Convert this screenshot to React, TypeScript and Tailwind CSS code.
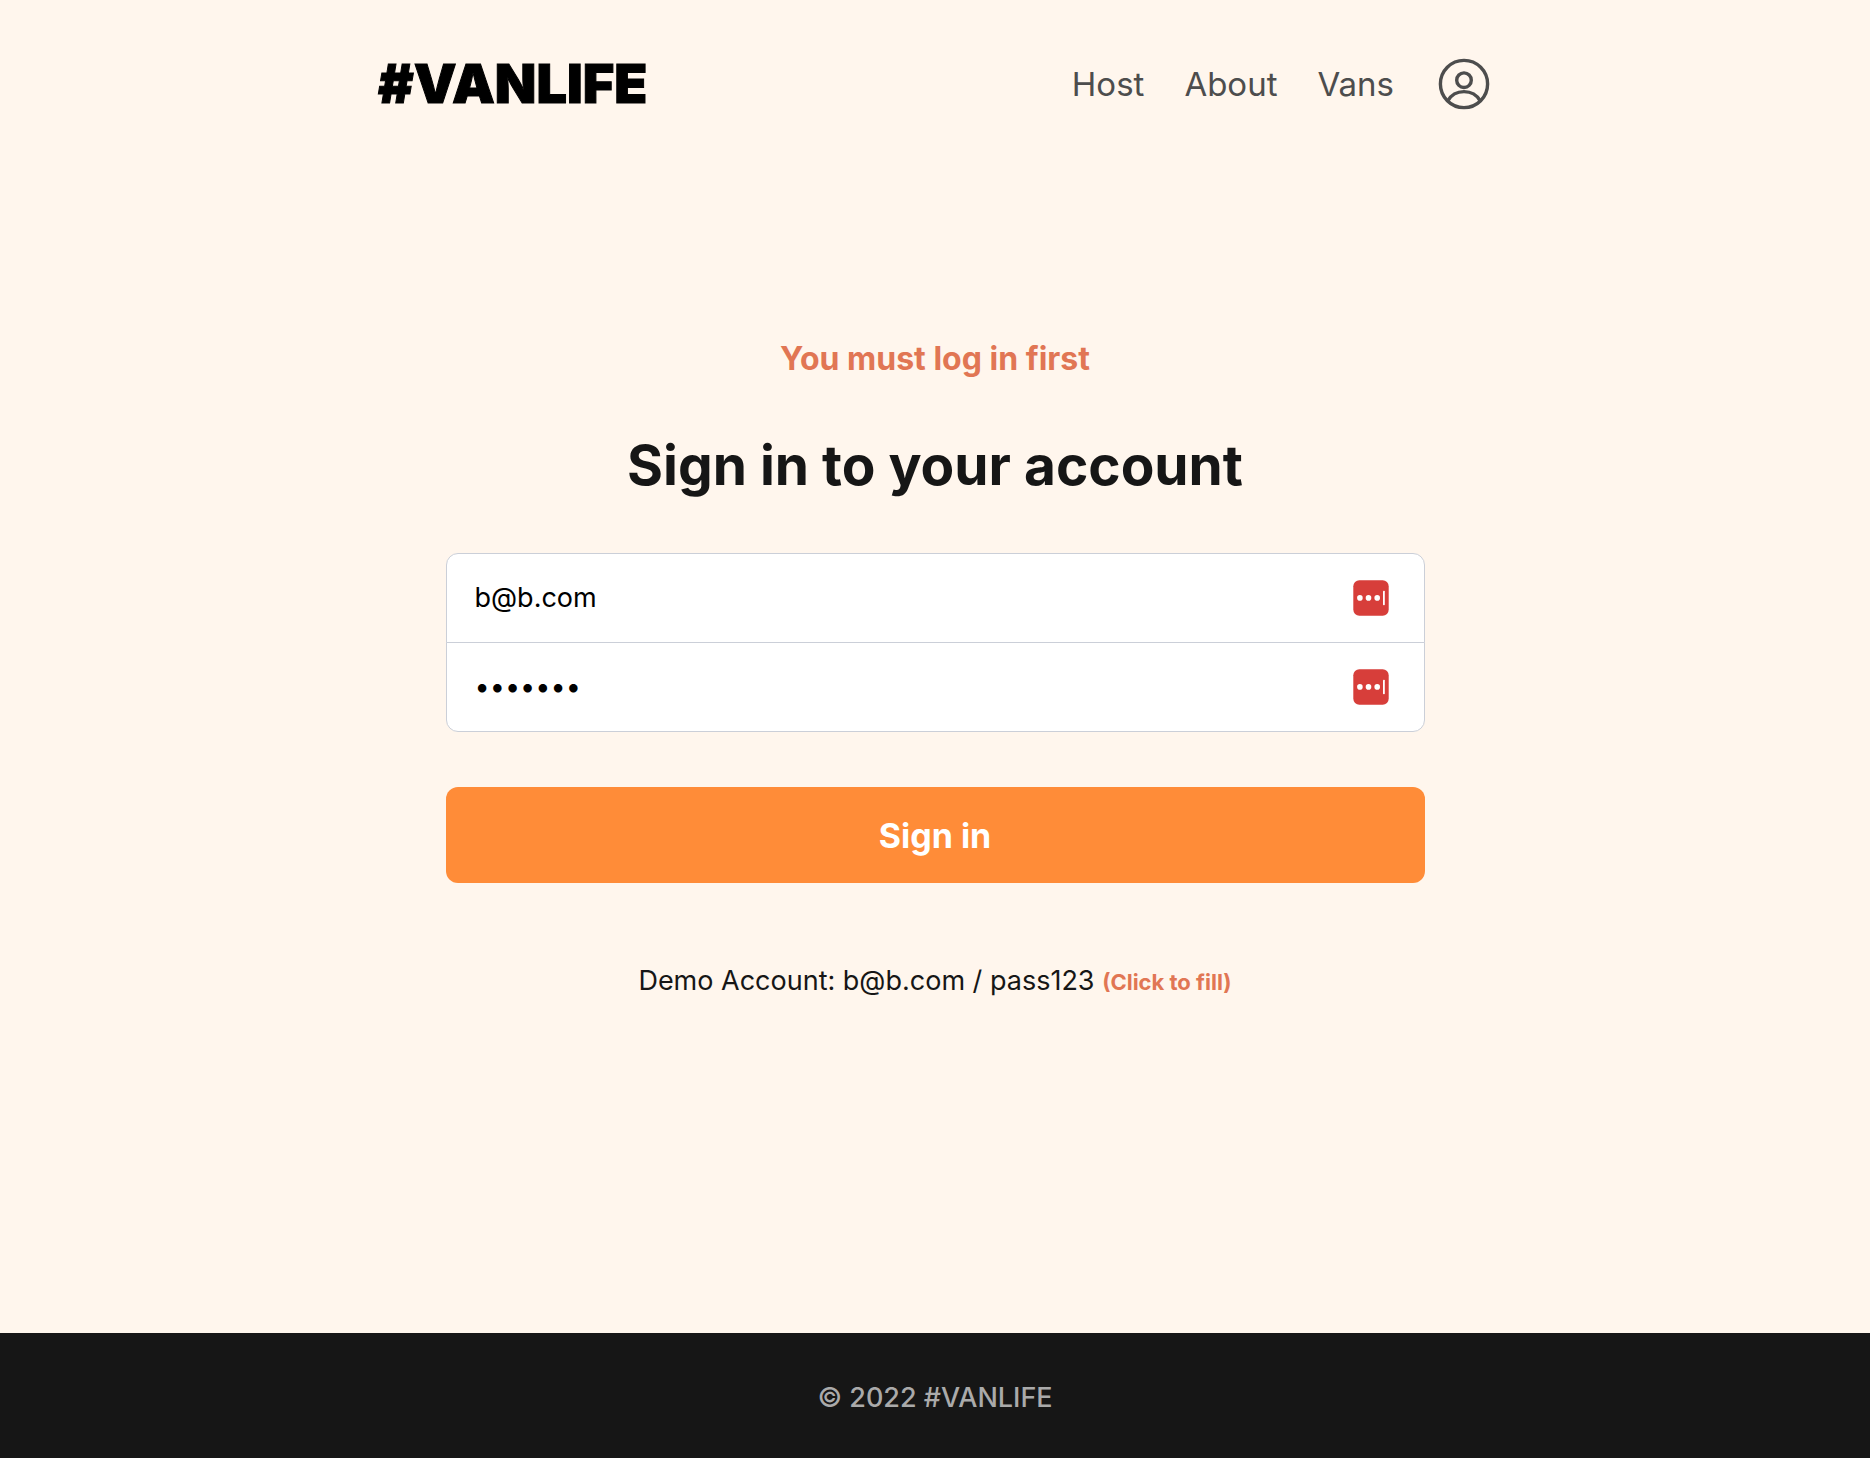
import { useState } from "react";

function UserIcon() {
  return (
    <svg viewBox="0 0 52 52" className="size-[52px]" fill="none" stroke="currentColor" strokeWidth="3.4" aria-hidden="true">
      <circle cx="26" cy="26" r="23.6" />
      <circle cx="26" cy="22.2" r="7.3" />
      <path d="M9.8 42.8C13 37.2 18.8 33.6 26 33.6S39 37.2 42.2 42.8" />
    </svg>
  );
}

function FillIcon() {
  return (
    <svg viewBox="0 0 36 36" className="size-9" aria-hidden="true">
      <rect x="0.3" y="0.3" width="35.4" height="35.4" rx="6" fill="#d73e3a" />
      <circle cx="6.9" cy="17.9" r="2.8" fill="#fff" />
      <circle cx="15.5" cy="17.9" r="2.8" fill="#fff" />
      <circle cx="24.2" cy="17.9" r="2.8" fill="#fff" />
      <rect x="30" y="10.8" width="1.8" height="14.4" rx="0.8" fill="#fff" />
    </svg>
  );
}

const links = ["Host", "About", "Vans"];
const field =
  "block w-full border border-[#cbcfd8] bg-white py-6 pl-7 pr-20 text-[27px] leading-10 text-black outline-none";
const fillButton = "absolute right-9 top-1/2 -translate-y-1/2";

export default function App() {
  const [email, setEmail] = useState("b@b.com");
  const [password, setPassword] = useState("pass123");
  const fill = () => {
    setEmail("b@b.com");
    setPassword("pass123");
  };

  return (
    <div className="flex min-h-screen flex-col bg-[#fff6ed] font-['Inter',sans-serif] text-[#161616]">
      <header className="mx-auto flex w-full max-w-[1114px] items-center justify-between pt-14 pb-[55px]">
        <a
          href="#home"
          className="text-[54px] font-black leading-[56px] text-black [-webkit-text-stroke:1px_black]"
        >
          #VANLIFE
        </a>
        <nav className="flex items-center gap-10 pr-[2px] text-[33px] leading-10 text-[#4d4d4d]">
          {links.map((l) => (
            <a key={l} href={`#${l.toLowerCase()}`}>
              {l}
            </a>
          ))}
          <a href="#login" aria-label="Account" className="ml-1">
            <UserIcon />
          </a>
        </nav>
      </header>

      <main className="mx-auto flex w-full max-w-[979px] flex-1 flex-col items-center pt-[172px]">
        <h3 className="text-[32px] font-bold leading-10 text-[#e17654]">You must log in first</h3>
        <h1 className="mt-[54px] text-[55px] font-bold leading-[64px]">Sign in to your account</h1>
        <form className="mt-14 w-full" onSubmit={(e) => e.preventDefault()}>
          <div className="relative">
            <input
              type="email"
              aria-label="Email address"
              value={email}
              onChange={(e) => setEmail(e.target.value)}
              className={`${field} rounded-t-xl`}
            />
            <button type="button" aria-label="Fill email" onClick={fill} className={fillButton}>
              <FillIcon />
            </button>
          </div>
          <div className="relative -mt-px">
            <input
              type="password"
              aria-label="Password"
              value={password}
              onChange={(e) => setPassword(e.target.value)}
              className={`${field} rounded-b-xl`}
            />
            <button type="button" aria-label="Fill password" onClick={fill} className={fillButton}>
              <FillIcon />
            </button>
          </div>
          <button className="mt-[55px] h-24 w-full rounded-xl bg-[#ff8c38] text-[34px] font-bold text-white">
            Sign in
          </button>
        </form>
        <p className="mt-20 text-[27px] leading-9">
          Demo Account: b@b.com / pass123{" "}
          <button type="button" onClick={fill} className="text-[22px] font-bold text-[#e17654]">
            (Click to fill)
          </button>
        </p>
      </main>

      <footer className="bg-[#161616] pt-[47px] pb-[42px] text-center text-[27px] font-medium leading-9 text-[#aaaaaa]">
        © 2022 #VANLIFE
      </footer>
    </div>
  );
}
